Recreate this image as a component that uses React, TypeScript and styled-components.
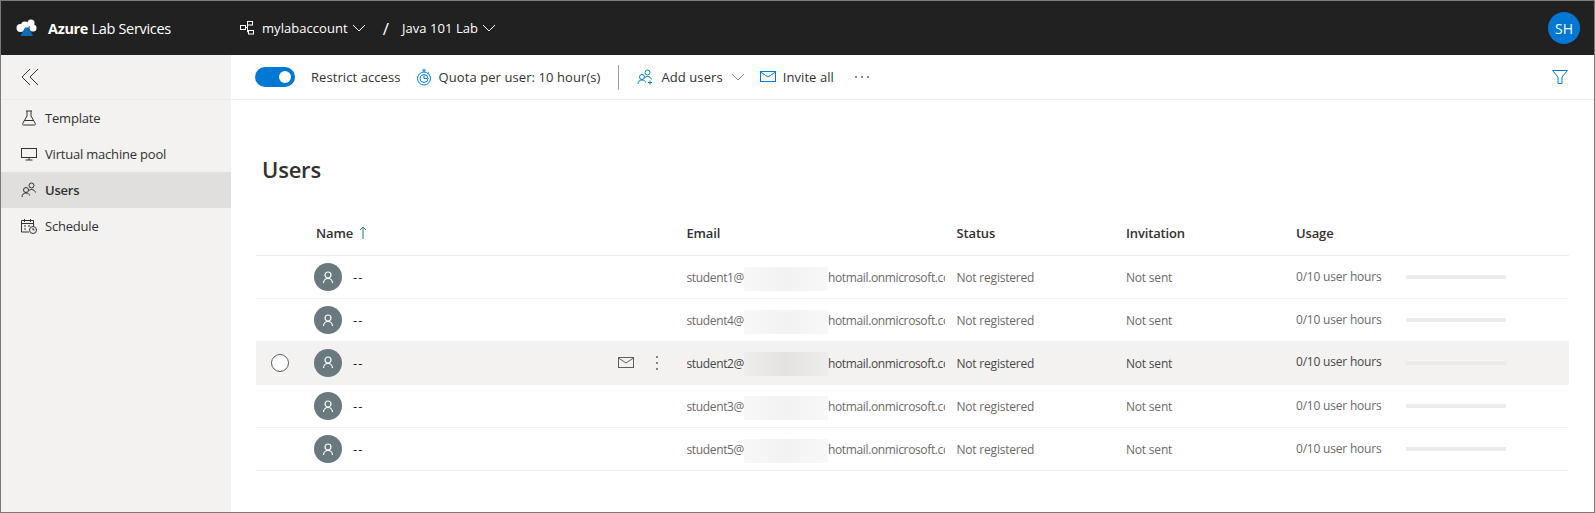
import React from "react";
import styled, { createGlobalStyle } from "styled-components";

const Global = createGlobalStyle`
  html, body { margin: 0; padding: 0; background: #fff; }
  * { box-sizing: border-box; }
  body { font-family: "Open Sans", "Noto Sans", "Liberation Sans", sans-serif; }
`;

const Frame = styled.div`
  width: 1595px;
  height: 513px;
  border: 1px solid #7a7a7a;
  display: flex;
  flex-direction: column;
  overflow: hidden;
`;

const TopBar = styled.header`
  height: 54px;
  flex: none;
  background: #212121;
  color: #fff;
  display: flex;
  align-items: center;
  padding-left: 15px;
  padding-right: 14px;
`;

const Brand = styled.div`
  display: flex;
  align-items: center;
  width: 224px;
  flex: none;
  font-size: 14.5px;
  letter-spacing: -0.33px;
  b { font-weight: 700; }
`;

const BrandText = styled.span`
  margin-left: 11px;
`;

const Crumb = styled.div`
  display: flex;
  align-items: center;
  font-size: 13px;
  letter-spacing: 0.05px;
`;

const CrumbName = styled.span<{ $left?: number }>`
  margin-left: ${(p) => p.$left ?? 0}px;
  margin-right: 4px;
`;

const CrumbSep = styled.span`
  margin: 0 13px 0 17px;
  font-size: 17px;
`;

const Avatar = styled.div`
  margin-left: auto;
  width: 32px;
  height: 32px;
  border-radius: 50%;
  background: #0078d4;
  font-size: 14px;
  display: flex;
  align-items: center;
  justify-content: center;
`;

const Body = styled.div`
  flex: 1;
  display: flex;
  min-height: 0;
`;

const Sidebar = styled.nav`
  width: 230px;
  flex: none;
  background: #f3f2f1;
`;

const Collapse = styled.div`
  height: 45px;
  border-bottom: 1px solid #edebe9;
  display: flex;
  align-items: center;
  padding-left: 20px;
  color: #323130;
`;

const NavItem = styled.div<{ $active?: boolean }>`
  height: 36px;
  display: flex;
  align-items: center;
  padding-left: 20px;
  gap: 8px;
  font-size: 13px;
  letter-spacing: -0.2px;
  color: #323130;
  background: ${(p) => (p.$active ? "#e1dfdd" : "transparent")};
  font-weight: ${(p) => (p.$active ? 600 : 400)};
`;

const Main = styled.main`
  flex: 1;
  min-width: 0;
  display: flex;
  flex-direction: column;
`;

const Toolbar = styled.div`
  height: 45px;
  flex: none;
  border-bottom: 1px solid #edebe9;
  display: flex;
  align-items: center;
  padding: 0 26px 0 24px;
  font-size: 13px;
  letter-spacing: 0.08px;
  color: #323130;
`;

const Toggle = styled.div`
  width: 40px;
  height: 20px;
  border-radius: 10px;
  background: #0078d4;
  display: flex;
  align-items: center;
  justify-content: flex-end;
  padding-right: 4px;
  &::after {
    content: "";
    width: 12px;
    height: 12px;
    border-radius: 50%;
    background: #fff;
  }
`;

const ToolItem = styled.div<{ $left: number; $gap?: number }>`
  display: flex;
  align-items: center;
  gap: ${(p) => p.$gap ?? 7}px;
  margin-left: ${(p) => p.$left}px;
  white-space: nowrap;
`;

const Divider = styled.div`
  width: 1px;
  height: 25px;
  background: #a19f9d;
  margin-left: 18px;
`;

const FilterSlot = styled.div`
  margin-left: auto;
  display: flex;
`;

const Content = styled.div`
  padding: 0 25px 0 25px;
`;

const Title = styled.h1`
  margin: 49px 0 0 6px;
  font-size: 22px;
  line-height: 40px;
  font-weight: 600;
  letter-spacing: -0.2px;
  color: #323130;
`;

const columns = "60px 370.5px 270px 169.5px 170px 1fr";

const HeadRow = styled.div`
  display: grid;
  grid-template-columns: ${columns};
  align-items: center;
  height: 44px;
  margin-top: 23px;
  padding-bottom: 2px;
  border-bottom: 1px solid #edebe9;
  font-size: 13px;
  font-weight: 600;
  letter-spacing: -0.15px;
  color: #323130;
`;

const HeadName = styled.div`
  grid-column: 2;
  display: flex;
  align-items: center;
  gap: 6px;
`;

const Row = styled.div<{ $hover?: boolean }>`
  display: grid;
  grid-template-columns: ${columns};
  align-items: center;
  height: ${(p) => (p.$hover ? 44 : 43)}px;
  margin-top: ${(p) => (p.$hover ? -1 : 0)}px;
  border-bottom: 1px solid #f3f2f1;
  background: ${(p) => (p.$hover ? "#f3f2f1" : "transparent")};
  font-size: 12px;
  letter-spacing: -0.2px;
  color: ${(p) => (p.$hover ? "#484644" : "#6b6967")};
`;

const RadioCell = styled.div`
  display: flex;
  padding-left: 15px;
`;

const Radio = styled.div`
  width: 18px;
  height: 18px;
  border-radius: 50%;
  border: 1px solid #605e5c;
  background: #fff;
`;

const NameCell = styled.div`
  display: flex;
  align-items: center;
  margin-left: -2px;
  font-size: 13px;
  letter-spacing: 1px;
  color: #201f1e;
`;

const Persona = styled.div`
  width: 28px;
  height: 28px;
  border-radius: 50%;
  background: #69797e;
  display: flex;
  align-items: center;
  justify-content: center;
  margin-right: 11px;
`;

const RowActions = styled.div`
  margin-left: auto;
  margin-right: 28px;
  display: flex;
  align-items: center;
  gap: 21px;
`;

const EmailCell = styled.div`
  width: 258px;
  display: flex;
  align-items: center;
  overflow: hidden;
  white-space: nowrap;
  letter-spacing: -0.36px;
  padding-top: 1px;
`;

const TextCell = styled.div`
  padding-top: 1px;
`;

const Blur = styled.span<{ $hover?: boolean }>`
  flex: none;
  width: 84px;
  height: 24px;
  margin-top: 2px;
  background: ${(p) =>
    p.$hover
      ? "linear-gradient(90deg,#eeedec,#e3e2e1 50%,#eeedec)"
      : "linear-gradient(90deg,#f8f8f8,#f2f2f2 50%,#f8f8f8)"};
`;

const UsageCell = styled.div`
  display: flex;
  align-items: center;
  margin-top: -2px;
`;

const UsageText = styled.span`
  width: 110px;
  flex: none;
`;

const Bar = styled.div`
  width: 100px;
  height: 4px;
  background: #edebe9;
  margin-top: 2px;
`;

const Chevron = ({ c = "#fff" }: { c?: string }) => (
  <svg width="14" height="8" viewBox="0 0 14 8" fill="none" stroke={c} strokeWidth="1">
    <path d="M1 1l6 6 6-6" />
  </svg>
);

const Logo = () => (
  <svg width="21" height="18" viewBox="0 0 21 18">
    <circle cx="4.5" cy="9" r="4" fill="#fff" />
    <circle cx="9" cy="6.5" r="4" fill="#fff" />
    <circle cx="15" cy="4" r="3.5" fill="#fff" />
    <circle cx="17" cy="9" r="3.5" fill="#fff" />
    <path fill="#0f6cbd" d="M9 8.500h3.500L17 17H4.500z" />
  </svg>
);

const NetIcon = () => (
  <svg width="14" height="14" viewBox="0 0 14 14" fill="none" stroke="#fff" strokeWidth="1">
    <rect x="7.5" y="0.5" width="5" height="3.5" />
    <rect x="0.5" y="4.5" width="5" height="4" />
    <rect x="8.5" y="9.5" width="5" height="3.5" />
    <path d="M5.500 6.500h2M7.500 2.500V11h1" />
  </svg>
);

const Collapser = () => (
  <svg width="18" height="18" viewBox="0 0 18 18" fill="none" stroke="#323130" strokeWidth="1">
    <path d="M9 1L1 9l8 8M17 1L9 9l8 8" />
  </svg>
);

const FlaskIcon = () => (
  <svg width="16" height="16" viewBox="0 0 16 16" fill="none" stroke="#323130" strokeWidth="1">
    <path d="M5 1h6M6 1v5L1.700 13.500c-.4.800 0 1.500.8 1.500h11c.8 0 1.200-.7.8-1.500L10 6V1M4 10.500h8" />
  </svg>
);

const MonitorIcon = () => (
  <svg width="16" height="16" viewBox="0 0 16 16" fill="none" stroke="#323130" strokeWidth="1">
    <rect x="0.5" y="2.5" width="15" height="9" />
    <path d="M8 11.500V14M4.500 14h7" />
  </svg>
);

const UsersIcon = ({ c = "#323130", plus = false }: { c?: string; plus?: boolean }) => (
  <svg width="16" height="16" viewBox="0 0 16 16" fill="none" stroke={c} strokeWidth="1">
    <circle cx="5" cy="8" r="2.5" />
    <circle cx="10.5" cy="3.5" r="2.5" />
    <path d="M1 15c0-2.500 1.500-4 4-4 2 0 3.200.8 3.700 2.500M8 8.400c.7-.6 1.500-.9 2.500-.9 2 0 3.500 1.200 4 3" />
    {plus && <path d="M13 11.500v4M11 13.500h4" />}
  </svg>
);

const CalendarIcon = () => (
  <svg width="16" height="16" viewBox="0 0 16 16" fill="none" stroke="#323130" strokeWidth="1">
    <path d="M8 14H.500V2.500h12V8" />
    <path d="M.500 5.500h12M3.500 1v3M9.500 1v3M3 8h2M7 8h2M3 11h2" />
    <circle cx="12" cy="12" r="3.5" />
    <path d="M12 10v2h1.500" />
  </svg>
);

const TimerIcon = () => (
  <svg width="16" height="17" viewBox="0 0 16 17" fill="none" stroke="#0078d4" strokeWidth="1">
    <circle cx="8" cy="9.5" r="6.5" />
    <circle cx="8" cy="9.5" r="4" />
    <path d="M6 1h4M8 1v2M13 3.500l-1.300 1.300M8 6.500v3h3" />
  </svg>
);

const MailIcon = ({ c = "#0078d4" }: { c?: string }) => (
  <svg width="16" height="12" viewBox="0 0 16 12" fill="none" stroke={c} strokeWidth="1">
    <rect x="0.5" y="0.5" width="15" height="10" />
    <path d="M.500 1l7.500 5 7.500-5" />
  </svg>
);

const MoreH = () => (
  <svg width="16" height="4" viewBox="0 0 16 4" fill="#605e5c">
    <circle cx="2" cy="2" r="1" />
    <circle cx="8" cy="2" r="1" />
    <circle cx="14" cy="2" r="1" />
  </svg>
);

const MoreV = () => (
  <svg width="4" height="16" viewBox="0 0 4 16" fill="#605e5c">
    <circle cx="2" cy="2" r="1" />
    <circle cx="2" cy="8" r="1" />
    <circle cx="2" cy="14" r="1" />
  </svg>
);

const FilterIcon = () => (
  <svg width="16" height="14" viewBox="0 0 16 14" fill="none" stroke="#0078d4" strokeWidth="1">
    <path d="M.500.500h15L10 7v6.500H6V7z" />
  </svg>
);

const UpArrow = () => (
  <svg width="8" height="13" viewBox="0 0 8 13" fill="none" stroke="#1a7f8e" strokeWidth="1">
    <path d="M4 13V1M1 4l3-3 3 3" />
  </svg>
);

const PersonIcon = () => (
  <svg width="12" height="13" viewBox="0 0 12 13" fill="none" stroke="#fff" strokeWidth="1.2">
    <circle cx="6" cy="4" r="3" />
    <path d="M1.500 12c0-2.500 1.800-4.500 4.500-4.500s4.500 2 4.500 4.500" />
  </svg>
);

const students = ["student1", "student4", "student2", "student3", "student5"];

export default function App() {
  return (
    <Frame>
      <Global />
      <TopBar>
        <Brand>
          <Logo />
          <BrandText>
            <b>Azure</b> Lab Services
          </BrandText>
        </Brand>
        <Crumb>
          <NetIcon />
          <CrumbName $left={8}>mylabaccount</CrumbName>
          <Chevron />
          <CrumbSep>/</CrumbSep>
          <CrumbName>Java 101 Lab</CrumbName>
          <Chevron />
        </Crumb>
        <Avatar>SH</Avatar>
      </TopBar>
      <Body>
        <Sidebar>
          <Collapse>
            <Collapser />
          </Collapse>
          <NavItem>
            <FlaskIcon />
            Template
          </NavItem>
          <NavItem>
            <MonitorIcon />
            Virtual machine pool
          </NavItem>
          <NavItem $active>
            <UsersIcon />
            Users
          </NavItem>
          <NavItem>
            <CalendarIcon />
            Schedule
          </NavItem>
        </Sidebar>
        <Main>
          <Toolbar>
            <Toggle />
            <ToolItem $left={16}>Restrict access</ToolItem>
            <ToolItem $left={15}>
              <TimerIcon />
              Quota per user: 10 hour(s)
            </ToolItem>
            <Divider />
            <ToolItem $left={18} $gap={8}>
              <UsersIcon c="#0078d4" plus />
              Add users
              <Chevron c="#8a8886" />
            </ToolItem>
            <ToolItem $left={15}>
              <MailIcon />
              Invite all
            </ToolItem>
            <ToolItem $left={20}>
              <MoreH />
            </ToolItem>
            <FilterSlot>
              <FilterIcon />
            </FilterSlot>
          </Toolbar>
          <Content>
            <Title>Users</Title>
            <HeadRow>
              <HeadName>
                Name <UpArrow />
              </HeadName>
              <div>Email</div>
              <div>Status</div>
              <div>Invitation</div>
              <div>Usage</div>
            </HeadRow>
            {students.map((s, i) => {
              const hover = i === 2;
              return (
                <Row key={s} $hover={hover}>
                  <RadioCell>{hover && <Radio />}</RadioCell>
                  <NameCell>
                    <Persona>
                      <PersonIcon />
                    </Persona>
                    --
                    {hover && (
                      <RowActions>
                        <MailIcon c="#605e5c" />
                        <MoreV />
                      </RowActions>
                    )}
                  </NameCell>
                  <EmailCell>
                    {s}@<Blur $hover={hover} />
                    hotmail.onmicrosoft.com
                  </EmailCell>
                  <TextCell>Not registered</TextCell>
                  <TextCell>Not sent</TextCell>
                  <UsageCell>
                    <UsageText>0/10 user hours</UsageText>
                    <Bar />
                  </UsageCell>
                </Row>
              );
            })}
          </Content>
        </Main>
      </Body>
    </Frame>
  );
}
